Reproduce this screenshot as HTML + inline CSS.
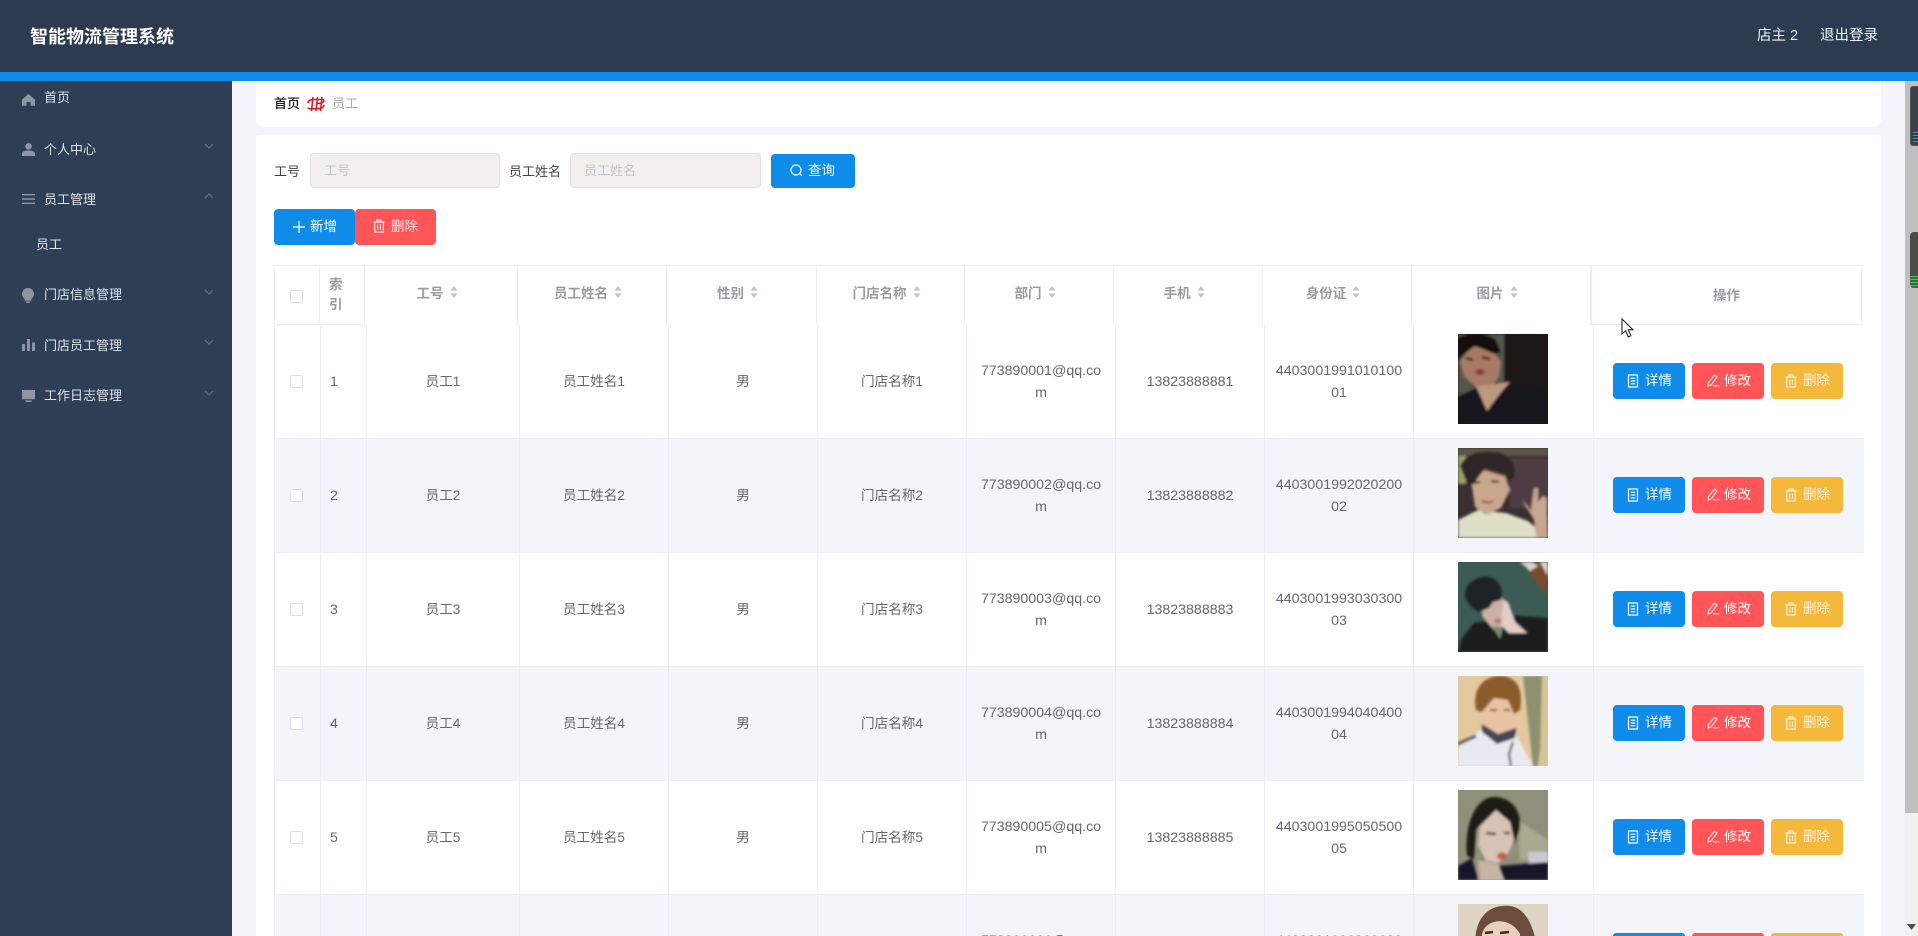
<!DOCTYPE html>
<html lang="zh-CN"><head><meta charset="utf-8"><title>智能物流管理系统</title>
<style>
*{box-sizing:border-box}
html,body{margin:0;padding:0;width:1918px;height:936px;overflow:hidden;background:#f3f5fa;font-family:"Liberation Sans","Noto Sans CJK SC",sans-serif;color:#606266}
#w{position:relative;width:1918px;height:936px;overflow:hidden;background:#f3f5fa}
.a{position:absolute;white-space:nowrap}
.nav{position:absolute;left:44px;font-size:13px;line-height:20px;color:#dfe3e9;white-space:nowrap}
.ni{position:absolute;left:22px;fill:#8e96a2}
.ch{position:absolute;left:204px;width:10px;height:6px;fill:none;stroke:#65738a;stroke-width:1.2}
.inp{position:absolute;top:153px;height:35px;background:#f3efef;border:1px solid #dedfe3;border-radius:4px;font-size:13px;line-height:33px;color:#c0c4cc;padding-left:13px}
.lb{position:absolute;top:162px;font-size:13px;line-height:20px;color:#444;white-space:nowrap}
.b{position:absolute;border-radius:4px;color:#fff;font-size:13.5px;white-space:nowrap}
.b span,.b svg{position:absolute}
.th{position:absolute;top:265px;height:60px;border-right:1px solid #ebeef5;font-size:13.5px;font-weight:700;color:#9a9ca2;display:flex;align-items:center;justify-content:center;padding-right:8px;padding-bottom:7px}
.th svg{margin-left:6px}
.r{position:absolute;left:274px;width:1590px;height:114px;display:grid;grid-template-columns:46px 46px 153px 149px 149px 149px 149px 149px 149px 180px 270px;border-bottom:1px solid #ebeef5;border-left:1px solid #ebeef5;background:#fff}
.r.s{background:#f4f5fa}
.r>div{border-right:1px solid #ebeef5;display:flex;align-items:center;justify-content:center;text-align:center;font-size:14.2px;line-height:22px;color:#66686c;position:relative;white-space:nowrap;padding-top:1px}
.r>div:nth-child(1){padding-right:3px;padding-top:0}
.r>div:nth-child(3),.r>div:nth-child(4),.r>div:nth-child(5),.r>div:nth-child(6){font-size:13.6px}
.r>div:last-child{border-right:0}
.r .cb{width:13px;height:13px;border:1px solid #dcdfe6;background:#fff;border-radius:2px}
.r .ix{justify-content:flex-start;padding-left:9px}
.r .pic{position:absolute;left:44px;top:9px;width:90px;height:90px;display:block}
.op .b{top:38px;width:72px;height:36px}
.bl{background:#0f8ce9}.rd{background:#ff5558}.yl{background:#f4b93a}
.t{left:32px;top:0;line-height:35px}
.i{left:14px;top:11px}
.s2{color:#f8f0e2}
.r.last{height:41px;border-bottom:0;overflow:hidden}
.r.last>div{align-items:flex-start;padding-top:35px}
.r.last .cl{height:6px;overflow:hidden;line-height:22px}
.r.last .pic{height:32px}
.op .b.e{height:3px;border-radius:4px 4px 0 0}
</style></head><body><div id="w">
<svg width="0" height="0" style="position:absolute"><defs>
<filter id="bl" x="-10%" y="-10%" width="120%" height="120%"><feGaussianBlur stdDeviation="1.4"/></filter>
<symbol id="doc" viewBox="0 0 12 14"><path d="M1.500 1h9v12h-9zM3.700 4.200h4.600M3.700 7h4.600M3.700 9.800h4.600" fill="none" stroke="currentColor" stroke-width="1.2"/></symbol>
<symbol id="ed" viewBox="0 0 14 14"><path d="M8.500 1.200 11 3 5.400 10.800l-3.100 1.100.2-3.300zM7 11.800h6.200" fill="none" stroke="currentColor" stroke-width="1.2"/></symbol>
<symbol id="tr" viewBox="0 0 12 14"><path d="M.5 3h11M4 3V1h4v2M1.700 3v10h8.600V3M4.600 5.600v5M7.400 5.600v5" fill="none" stroke="currentColor" stroke-width="1.2"/></symbol>
<symbol id="so" viewBox="0 0 8 14"><path d="M4 1 7.600 5.600H.4zM4 13 .4 8.400h7.200z" fill="#c0c4cc"/></symbol>
</defs></svg>

<!-- header -->
<div class="a" style="left:0;top:0;width:1918px;height:72px;background:#2c3b50"></div>
<div class="a" style="left:0;top:72px;width:1918px;height:9px;background:#0f8ce9"></div>
<div class="a" style="left:30px;top:23px;font-size:18px;line-height:28px;font-weight:700;color:#fff">智能物流管理系统</div>
<div class="a" style="left:1757px;top:26px;font-size:14.5px;line-height:20px;color:#f2f4f7">店主 2</div>
<div class="a" style="left:1820px;top:26px;font-size:14.5px;line-height:20px;color:#f2f4f7">退出登录</div>

<!-- sidebar -->
<div class="a" style="left:0;top:81px;width:232px;height:855px;background:#2e3e55"></div>
<svg class="ni" style="top:94px" width="13" height="12" viewBox="0 0 13 12"><path d="M6.500 0 13 5.600v6.200H8.500V8h-4v3.800H0V5.600z"/></svg>
<div class="nav" style="top:88px">首页</div>
<svg class="ni" style="top:143px" width="13" height="13" viewBox="0 0 13 13"><circle cx="6.500" cy="3.400" r="3.300"/><path d="M0 13v-2.200C0 8.600 2.400 7.500 6.500 7.500S13 8.600 13 10.800V13z"/></svg>
<div class="nav" style="top:140px">个人中心</div>
<svg class="ch" style="top:143px" viewBox="0 0 10 6"><path d="M1 1l4 4 4-4"/></svg>
<svg class="ni" style="top:194px" width="13" height="10" viewBox="0 0 13 10"><path d="M0 0h13v1.400H0zM0 4.300h13v1.400H0zM0 8.600h13V10H0z"/></svg>
<div class="nav" style="top:190px">员工管理</div>
<svg class="ch" style="top:193px" viewBox="0 0 10 6"><path d="M1 5l4-4 4 4"/></svg>
<div class="nav" style="left:36px;top:235px">员工</div>
<svg class="ni" style="top:288px" width="12" height="15" viewBox="0 0 12 15"><path d="M6 0a6 6 0 0 1 3.400 10.900V12.600H2.600v-1.700A6 6 0 0 1 6 0zM3.400 13.400h5.200L7.500 15h-3z"/></svg>
<div class="nav" style="top:285px">门店信息管理</div>
<svg class="ch" style="top:289px" viewBox="0 0 10 6"><path d="M1 1l4 4 4-4"/></svg>
<svg class="ni" style="top:339px" width="13" height="12" viewBox="0 0 13 12"><path d="M0 5h3v7H0zM5 0h3v12H5zM10 3.500h3V12h-3z"/></svg>
<div class="nav" style="top:336px">门店员工管理</div>
<svg class="ch" style="top:339px" viewBox="0 0 10 6"><path d="M1 1l4 4 4-4"/></svg>
<svg class="ni" style="top:390px" width="13" height="12" viewBox="0 0 13 12"><path d="M0 0h13v9.200H0zM3.500 10.400h6V12h-6z"/></svg>
<div class="nav" style="top:386px">工作日志管理</div>
<svg class="ch" style="top:390px" viewBox="0 0 10 6"><path d="M1 1l4 4 4-4"/></svg>

<!-- breadcrumb -->
<div class="a" style="left:256px;top:81px;width:1625px;height:46px;background:#fff;border-radius:0 0 8px 8px"></div>
<div class="a" style="left:274px;top:94px;font-size:13px;line-height:20px;color:#1c1c1c;font-weight:500">首页</div>
<svg class="a" style="left:307px;top:96px" width="18" height="16" viewBox="0 0 18 16"><path d="M6 1 4.500 15M10.500 1 9 15M15 1 13.500 15M1 7C1 4 4 3.500 8 3.500s9-.5 9 1.200M1 11.500c0 2 4 1.200 8 1.200s8-.5 8-4M17 4.500C17 7 12 7.500 9 7.500" fill="none" stroke="#e0141e" stroke-width="1.500"/></svg>
<div class="a" style="left:332px;top:94px;font-size:13px;line-height:20px;color:#a8abb2">员工</div>

<!-- card -->
<div class="a" style="left:256px;top:135px;width:1625px;height:801px;background:#fff;border-radius:3px 3px 0 0"></div>
<div class="lb" style="left:274px">工号</div>
<div class="inp" style="left:310px;width:190px">工号</div>
<div class="lb" style="left:509px">员工姓名</div>
<div class="inp" style="left:570px;width:191px">员工姓名</div>
<div class="b bl" style="left:771px;top:154px;width:84px;height:34px"><svg style="left:19px;top:10px" width="13" height="13" viewBox="0 0 13 13"><path d="M6 1a5 5 0 1 0 0 10A5 5 0 0 0 6 1zM9.700 9.700l2 2" fill="none" stroke="#fff" stroke-width="1.200"/></svg><span style="left:37px;top:0;line-height:34px">查询</span></div>
<div class="b bl" style="left:274px;top:209px;width:81px;height:36px"><svg style="left:19px;top:12px" width="12" height="12" viewBox="0 0 12 12"><path d="M6 0v12M0 6h12" stroke="#fff" stroke-width="1.200"/></svg><span style="left:36px;top:0;line-height:35px">新增</span></div>
<div class="b rd" style="left:355px;top:209px;width:81px;height:36px"><svg style="left:18px;top:10px;color:#fde8ea" width="12" height="14"><use href="#tr"/></svg><span style="left:36px;top:0;line-height:35px;color:#fde8ea">删除</span></div>

<!-- table head -->
<div class="a" style="left:274px;top:265px;width:1588px;height:1px;background:#ebeef5"></div>
<div class="a" style="left:274px;top:265px;width:1px;height:60px;background:#ebeef5"></div>
<div class="a" style="left:274px;top:324px;width:91px;height:1px;background:#ebeef5"></div>
<div class="a" style="left:1591px;top:324px;width:271px;height:1px;background:#ebeef5"></div>
<div class="th" style="left:274px;width:46px"></div>
<div class="a" style="left:290px;top:290px;width:13px;height:13px;border:1px solid #dcdfe6;border-radius:2px"></div>
<div class="th" style="left:320px;width:45px;justify-content:flex-start;padding-left:9px;padding-bottom:1px;line-height:20px;white-space:normal">索<br>引</div>
<div class="th" style="left:365px;width:153px">工号<svg width="8" height="14"><use href="#so"/></svg></div>
<div class="th" style="left:518px;width:149px">员工姓名<svg width="8" height="14"><use href="#so"/></svg></div>
<div class="th" style="left:667px;width:150px">性别<svg width="8" height="14"><use href="#so"/></svg></div>
<div class="th" style="left:817px;width:148px">门店名称<svg width="8" height="14"><use href="#so"/></svg></div>
<div class="th" style="left:965px;width:149px">部门<svg width="8" height="14"><use href="#so"/></svg></div>
<div class="th" style="left:1114px;width:149px">手机<svg width="8" height="14"><use href="#so"/></svg></div>
<div class="th" style="left:1263px;width:149px">身份证<svg width="8" height="14"><use href="#so"/></svg></div>
<div class="th" style="left:1412px;width:179px">图片<svg width="8" height="14"><use href="#so"/></svg></div>
<div class="th" style="left:1591px;width:271px;border-left:1px solid #ebeef5;padding:0 0 2px">操作</div>

<!-- rows -->
<div class="r" style="top:325px"><div><i class="cb"></i></div><div class="ix">1</div><div>员工1</div><div>员工姓名1</div><div>男</div><div>门店名称1</div><div>773890001@qq.co<br>m</div><div>13823888881</div><div>4403001991010100<br>01</div>
<div><svg class="pic" viewBox="0 0 90 90"><rect width="90" height="90" fill="#1a1816"/><g filter="url(#bl)"><path d="M0 0h47v62H0z" fill="#55564c"/><path d="M46 0h44v90H46z" fill="#1b1917"/><path d="M2 28 14 12l20 4 9 12-2 14-9 14-12-1L6 42z" fill="#a77a66"/><path d="M0 26V4C8-2 30-2 38 6l5 12-6 2-20-8L6 20z" fill="#141110"/><path d="M0 62 18 54l15 4 18-8 26 2 13 8v30H0z" fill="#14151c"/><path d="M18 52l14-1 20-3-8 9-15 20z" fill="#b9997f"/><ellipse cx="22" cy="38" rx="5" ry="3" fill="#8c3a3c"/><path d="M8 24l7 2M24 23l8 2" stroke="#1d1512" stroke-width="2.400"/></g></svg></div>
<div class="op"><div class="b bl" style="left:19px"><svg class="i" width="12" height="14" color="#fff"><use href="#doc"/></svg><span class="t">详情</span></div><div class="b rd" style="left:98px"><svg class="i" width="14" height="14" color="#fbdcdf"><use href="#ed"/></svg><span class="t">修改</span></div><div class="b yl s2" style="left:177px"><svg class="i" width="12" height="14" color="#f8f0e2"><use href="#tr"/></svg><span class="t">删除</span></div></div></div>

<div class="r s" style="top:439px"><div><i class="cb"></i></div><div class="ix">2</div><div>员工2</div><div>员工姓名2</div><div>男</div><div>门店名称2</div><div>773890002@qq.co<br>m</div><div>13823888882</div><div>4403001992020200<br>02</div>
<div><svg class="pic" viewBox="0 0 90 90"><rect width="90" height="90" fill="#3a2f30"/><g filter="url(#bl)"><path d="M0 0h90v8H0z" fill="#5d5546"/><path d="M0 8h8v28H0z" fill="#98a468"/><path d="M52 10h38v50H52z" fill="#4d3d42"/><path d="M0 72 20 62l28 3 22 8 20 17H0z" fill="#dfdfc6"/><path d="M13 32l14-10 20 6 5 14-9 18-15 7-11-8z" fill="#c9a78d"/><path d="M2 18C8 4 24 3 36 4s22 8 21 24l-6 6-6-10-18-4-10 14-6 6z" fill="#2f2825"/><path d="M14 35l8-1M33 33l8 1" stroke="#2a1f1b" stroke-width="2"/><path d="M24 53c4 2 8 2 11 0" stroke="#a4574f" stroke-width="2.200" fill="none"/><path d="M64 52 73 62 76 40 80 40 80 54 85 48 89 50 90 90 78 89 76 72z" fill="#c8a68f"/></g></svg></div>
<div class="op"><div class="b bl" style="left:19px"><svg class="i" width="12" height="14" color="#fff"><use href="#doc"/></svg><span class="t">详情</span></div><div class="b rd" style="left:98px"><svg class="i" width="14" height="14" color="#fbdcdf"><use href="#ed"/></svg><span class="t">修改</span></div><div class="b yl s2" style="left:177px"><svg class="i" width="12" height="14" color="#f8f0e2"><use href="#tr"/></svg><span class="t">删除</span></div></div></div>

<div class="r" style="top:553px"><div><i class="cb"></i></div><div class="ix">3</div><div>员工3</div><div>员工姓名3</div><div>男</div><div>门店名称3</div><div>773890003@qq.co<br>m</div><div>13823888883</div><div>4403001993030300<br>03</div>
<div><svg class="pic" viewBox="0 0 90 90"><rect width="90" height="90" fill="#3d5b55"/><g filter="url(#bl)"><path d="M66 0h24v34L72 12z" fill="#7a4a2a"/><path d="M62 0H74L80 4 72 9zM82 0h8v14z" fill="#d8d4ce"/><path d="M0 90 4 76l12-15 24-4 10-4 40 3v34z" fill="#1a1c1f"/><path d="M24 42l14-10 12 8 0 14-6 12-8 2-12-14z" fill="#cdb1a8"/><path d="M7 30C10 18 24 12 34 16c8 4 12 12 9 22l-8 2-4 6-10 4C14 46 6 40 7 30z" fill="#1e2326"/><path d="M46 38l5 4 6 18 12 11-18 0-8-8 1-12z" fill="#e3cdc7"/><path d="M34 64l8 13 3-12z" fill="#7c8a78"/><ellipse cx="40" cy="59" rx="4" ry="2.500" fill="#b57a74"/></g></svg></div>
<div class="op"><div class="b bl" style="left:19px"><svg class="i" width="12" height="14" color="#fff"><use href="#doc"/></svg><span class="t">详情</span></div><div class="b rd" style="left:98px"><svg class="i" width="14" height="14" color="#fbdcdf"><use href="#ed"/></svg><span class="t">修改</span></div><div class="b yl s2" style="left:177px"><svg class="i" width="12" height="14" color="#f8f0e2"><use href="#tr"/></svg><span class="t">删除</span></div></div></div>

<div class="r s" style="top:667px"><div><i class="cb"></i></div><div class="ix">4</div><div>员工4</div><div>员工姓名4</div><div>男</div><div>门店名称4</div><div>773890004@qq.co<br>m</div><div>13823888884</div><div>4403001994040400<br>04</div>
<div><svg class="pic" viewBox="0 0 90 90"><rect width="90" height="90" fill="#e4c89e"/><g filter="url(#bl)"><path d="M65 0h19v60l-4 30H75z" fill="#8e9070"/><path d="M84 0h6v90h-8z" fill="#d6c697"/><path d="M24 22h33v26l-10 14-10 0-13-16z" fill="#e9c2a4"/><path d="M18 34C14 12 26 0 42 0s24 12 20 34l-6 4-6-14-14-2-12 14z" fill="#8b5b2b"/><path d="M0 72 22 54l18 12 18-8 17 32H0z" fill="#e9eaf1"/><path d="M24 48l16 10 18-6-1 10-18 6-15-12z" fill="#4a4452"/><path d="M55 66l-4 12 2 12" stroke="#33333d" stroke-width="2" fill="none"/><path d="M0 68l18-8" stroke="#55505e" stroke-width="3"/><path d="M32 34l7 0M46 34l6 0" stroke="#5a3a26" stroke-width="1.800"/></g></svg></div>
<div class="op"><div class="b bl" style="left:19px"><svg class="i" width="12" height="14" color="#fff"><use href="#doc"/></svg><span class="t">详情</span></div><div class="b rd" style="left:98px"><svg class="i" width="14" height="14" color="#fbdcdf"><use href="#ed"/></svg><span class="t">修改</span></div><div class="b yl s2" style="left:177px"><svg class="i" width="12" height="14" color="#f8f0e2"><use href="#tr"/></svg><span class="t">删除</span></div></div></div>

<div class="r" style="top:781px"><div><i class="cb"></i></div><div class="ix">5</div><div>员工5</div><div>员工姓名5</div><div>男</div><div>门店名称5</div><div>773890005@qq.co<br>m</div><div>13823888885</div><div>4403001995050500<br>05</div>
<div><svg class="pic" viewBox="0 0 90 90"><rect width="90" height="90" fill="#8f9079"/><g filter="url(#bl)"><path d="M60 30l30 20v20H62z" fill="#a9aa90"/><path d="M70 62h20v20H72z" fill="#c8ccd0"/><path d="M9 66C6 30 20 7 36 7s28 12 26 32l-6 16-4-20-14-12-20 16-2 30z" fill="#1d1a18"/><path d="M22 36 38 20l14 12 4 18-6 14-10 9-12-2-8-16z" fill="#d8c3b7"/><path d="M28 43l10 1M46 43l6 0" stroke="#3a2a26" stroke-width="2.200"/><ellipse cx="44" cy="66" rx="5" ry="3.500" fill="#c65a44"/><path d="M0 76 14 68l6 22H0zM40 76l50-4v18H44z" fill="#15182a"/><path d="M20 70l20 4 6 16H22z" fill="#c9b4a8"/></g></svg></div>
<div class="op"><div class="b bl" style="left:19px"><svg class="i" width="12" height="14" color="#fff"><use href="#doc"/></svg><span class="t">详情</span></div><div class="b rd" style="left:98px"><svg class="i" width="14" height="14" color="#fbdcdf"><use href="#ed"/></svg><span class="t">修改</span></div><div class="b yl s2" style="left:177px"><svg class="i" width="12" height="14" color="#f8f0e2"><use href="#tr"/></svg><span class="t">删除</span></div></div></div>

<div class="r s last" style="top:895px"><div></div><div></div><div></div><div></div><div></div><div></div><div><div class="cl">773890006@qq.co</div></div><div></div><div><div class="cl">4403001996060600</div></div>
<div><svg class="pic" viewBox="0 0 90 32"><rect width="90" height="32" fill="#dfd5c4"/><path d="M17 40C17 12 32 0 52 2c14 2 22 16 26 36v2H17z" fill="#6d4c3e"/><path d="M24 30C28 14 52 12 62 30v10H24z" fill="#ead0ba"/><path d="M27 29l8-1M42 29l9-1" stroke="#3a2a26" stroke-width="2.400"/></svg></div>
<div class="op" style="padding:0"><div class="b bl e" style="left:19px"></div><div class="b rd e" style="left:98px"></div><div class="b yl e" style="left:177px"></div></div></div>

<!-- cursor -->
<svg class="a" style="left:1621px;top:318px" width="14" height="21" viewBox="0 0 14 21"><path d="M1 1v15l3.600-3.200 2.700 6.200 2.600-1.200-2.700-6H12z" fill="#fff" stroke="#111" stroke-width="1"/></svg>

<!-- scrollbar -->
<div class="a" style="left:1905px;top:81px;width:13px;height:855px;background:#f1f1f1"></div>
<div class="a" style="left:1905px;top:81px;width:13px;height:732px;background:#bfbfbf"></div>
<div class="a" style="left:1910px;top:86px;width:8px;height:60px;background:#3a4149;border-radius:3px 0 0 3px;border:1px solid #4d545c;border-right:0"></div>
<div class="a" style="left:1913px;top:132px;width:5px;height:11px;background:repeating-linear-gradient(#4f93bd 0 1px,#2a3c4a 1px 3px)"></div>
<div class="a" style="left:1910px;top:232px;width:8px;height:56px;background:#4a4a4a;border-radius:4px 0 0 4px"></div>
<div class="a" style="left:1910px;top:276px;width:8px;height:12px;background:repeating-linear-gradient(#58b45f 0 1px,#2f6f3a 1px 3px);border-radius:0 0 0 4px"></div>
<svg class="a" style="left:1907px;top:924px" width="9" height="6" viewBox="0 0 9 6"><path d="M0 0h9L4.500 6z" fill="#505050"/></svg>
</div></body></html>
